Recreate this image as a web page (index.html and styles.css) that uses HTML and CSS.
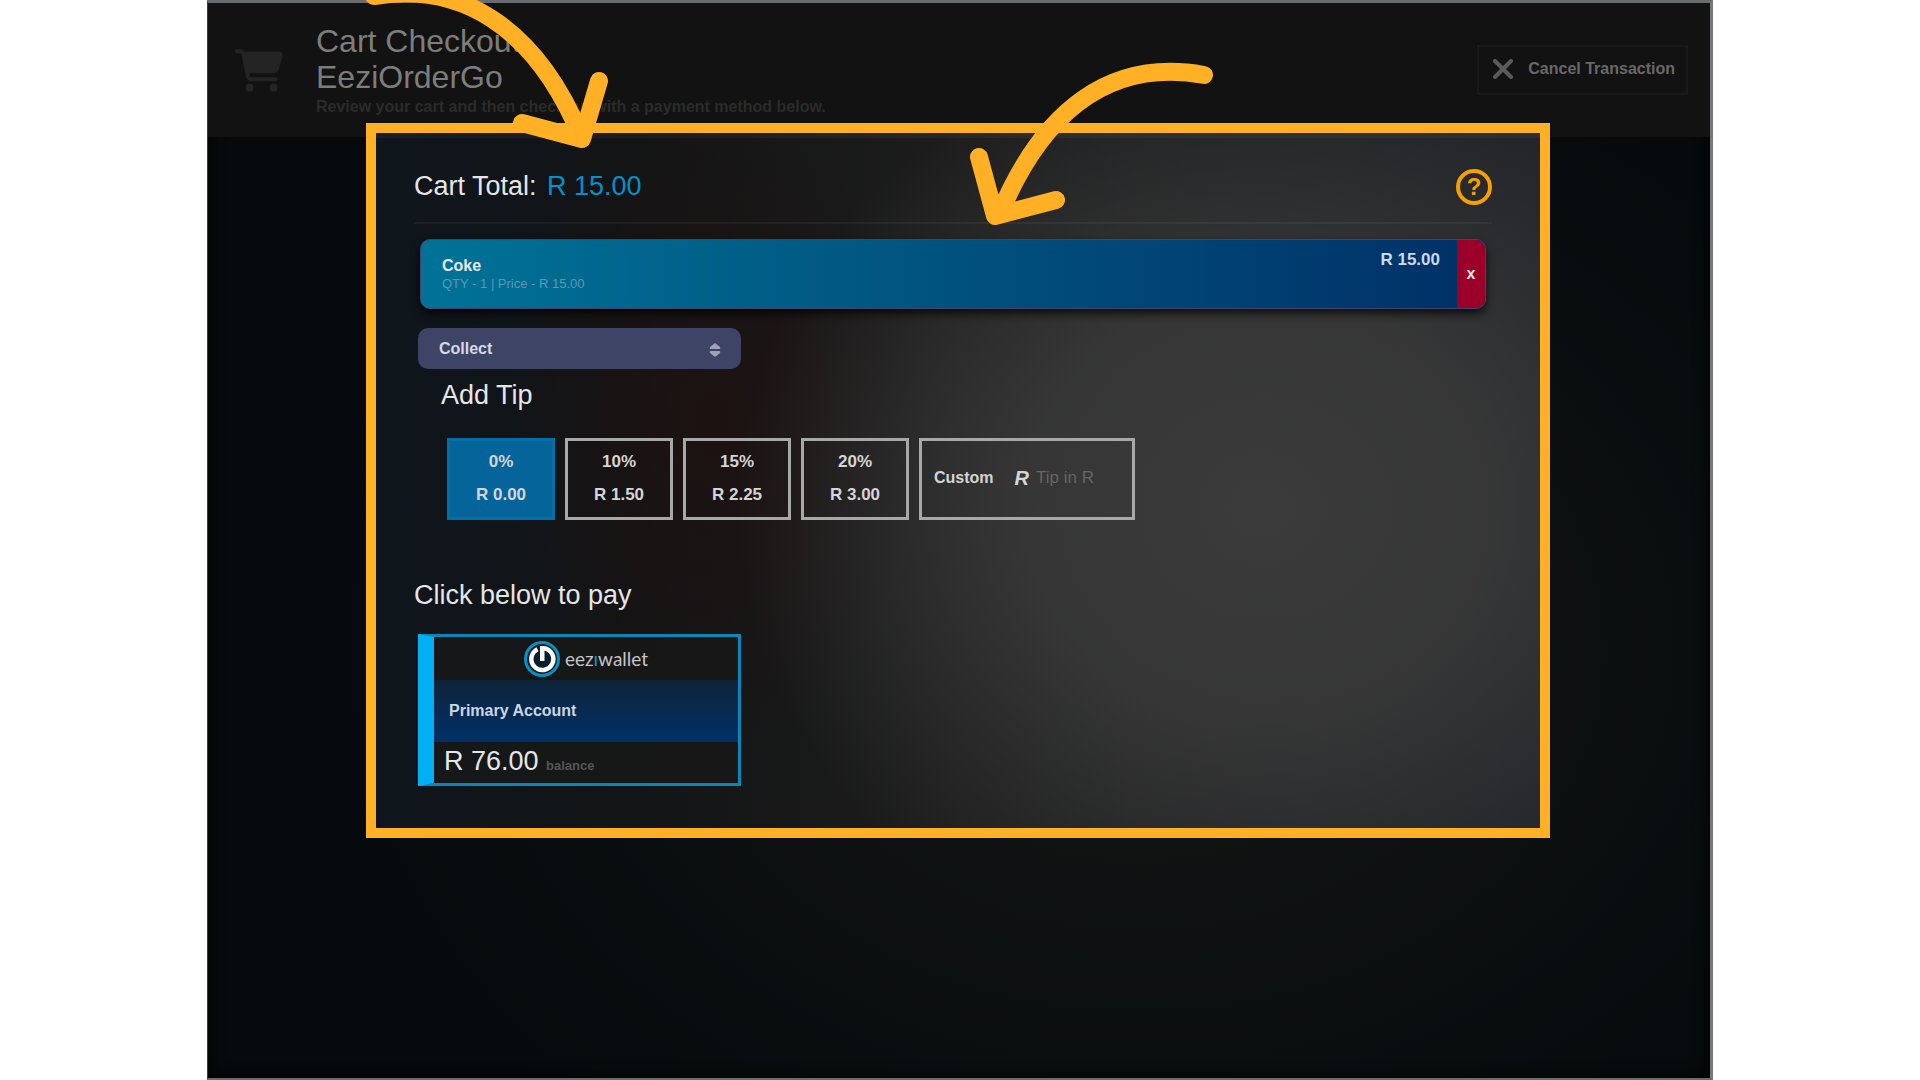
FILE: index.html
```html
<!DOCTYPE html>
<html lang="en">
<head>
    <meta charset="UTF-8">
    <meta name="viewport" content="width=device-width, initial-scale=1.0">
    <title>Cart Checkout</title>
    <link rel="stylesheet" href="styles.css">
</head>
<body>
    <div class="app">
        <header class="header">
            <svg class="cart-icon" viewBox="0 0 576 512" aria-hidden="true"><path d="M0 24C0 10.7 10.7 0 24 0H69.5c22 0 41.5 12.8 50.6 32h411c26.3 0 45.5 25 38.6 50.4l-41 152.3c-8.5 31.4-37 53.3-69.5 53.3H170.7l5.4 28.5c2.2 11.3 12.1 19.5 23.6 19.5H488c13.3 0 24 10.7 24 24s-10.7 24-24 24H199.7c-34.6 0-64.3-24.6-70.7-58.5L77.4 54.5c-.7-3.8-4-6.5-7.9-6.5H24C10.7 48 0 37.3 0 24zM128 464a48 48 0 1 1 96 0 48 48 0 1 1 -96 0zm336-48a48 48 0 1 1 0 96 48 48 0 1 1 0-96z"/></svg>
            <div class="header-text">
                <h1>Cart Checkout<br>EeziOrderGo</h1>
                <p>Review your cart and then checkout with a payment method below.</p>
            </div>
            <button type="button" class="btn-cancel">
                <svg viewBox="0 0 22 20" aria-hidden="true"><path d="M3 2 19 18M19 2 3 18"/></svg>
                Cancel Transaction
            </button>
        </header>

        <main class="panel">
            <div class="total-row">
                <h2>Cart Total: <span class="total-price">R 15.00</span></h2>
                <button type="button" class="btn-help" aria-label="Help">?</button>
            </div>

            <div class="item">
                <div class="item-info">
                    <div class="item-name">Coke</div>
                    <div class="item-qty">QTY - 1 | Price - R 15.00</div>
                </div>
                <div class="item-price">R 15.00</div>
                <button type="button" class="btn-remove">x</button>
            </div>

            <div class="select-wrap">
                <select class="select" aria-label="Order type">
                    <option>Collect</option>
                </select>
                <svg class="select-arrows" viewBox="0 0 12 14" aria-hidden="true"><path d="M6 0 11 4Q12 6 10 6H2Q0 6 1 4ZM6 14 11 10Q12 8 10 8H2Q0 8 1 10Z"/></svg>
            </div>

            <h2 class="tip-title">Add Tip</h2>
            <div class="tips">
                <button type="button" class="tip tip-active"><span>0%</span><span>R 0.00</span></button>
                <button type="button" class="tip"><span>10%</span><span>R 1.50</span></button>
                <button type="button" class="tip"><span>15%</span><span>R 2.25</span></button>
                <button type="button" class="tip"><span>20%</span><span>R 3.00</span></button>
                <div class="tip-custom">
                    <label for="customTip">Custom</label>
                    <span class="currency">R</span>
                    <input type="text" id="customTip" placeholder="Tip in R">
                </div>
            </div>

            <h2 class="pay-title">Click below to pay</h2>
            <button type="button" class="wallet">
                <span class="wallet-logo">
                    <svg viewBox="0 0 36 36" aria-hidden="true">
                        <circle cx="18" cy="18" r="16.5" fill="#04202c" stroke="#0b8fc0" stroke-width="3"/>
                        <path d="M13.5 8.2A11 11 0 1 0 20 7.2" fill="none" stroke="#fff" stroke-width="4.5"/>
                        <path d="M16 5h4.5v15h-4.5z" fill="#fff"/>
                    </svg>
                    <span class="wallet-brand">eez<i>ı</i>wallet</span>
                </span>
                <span class="wallet-name">Primary Account</span>
                <span class="wallet-balance">R 76.00 <small>balance</small></span>
            </button>
        </main>

        <!-- guide arrows -->
        <svg class="arrow arrow-total" viewBox="0 0 250 150" aria-hidden="true">
            <path d="M14-4C99-18 174 24 221 136M239 81 222 139 162 123"/>
        </svg>
        <svg class="arrow arrow-item" viewBox="0 0 260 180" aria-hidden="true">
            <path d="M244 20C150 3 83 56 40 158M19 102 35 161 96 145"/>
        </svg>
    </div>
</body>
</html>
```
FILE: styles.css
```css
* {
    box-sizing: border-box;
}
body {
    margin: 0;
    background-color: #fff;
    font-family: "Liberation Sans", Arial, sans-serif;
    font-size: 16px;
    color: #e6e6e6;
}
h1, h2, p {
    margin: 0;
    font-weight: normal;
}
button, select, input {
    font-family: inherit;
    color: inherit;
}
.app {
    position: relative;
    max-width: 1506px;
    min-height: 100vh;
    margin: 0 auto;
    border: 1px solid #3c3d40;
    border-width: 3px 3px 2px 1px;
    border-color: #6b6c70 #77787c #6b6c70 #3c3d40;
    background:
        radial-gradient(ellipse 55% 60% at 62% 60%, #151616 0%, rgba(19, 19, 19, 0) 100%),
        #060a0c;
    box-shadow: inset 0 0 16px #000;
}

/* header */
.header {
    display: flex;
    align-items: flex-start;
    height: 134px;
    padding: 20px 22px 0 27px;
    background-color: #121212;
}
.cart-icon {
    width: 48px;
    height: 43px;
    margin: 26px 33px 0 0;
    fill: #242424;
}
.header-text {
    flex: 1;
}
.header h1 {
    font-size: 32px;
    line-height: 36px;
    color: #7d7d7d;
}
.header p {
    font-size: 16px;
    font-weight: bold;
    line-height: 24px;
    color: #2b2b2b;
}
.btn-cancel {
    display: flex;
    align-items: center;
    gap: 14px;
    height: 50px;
    margin-top: 22px;
    padding: 0 11px 2px 13px;
    border: 2px solid #191919;
    background: none;
    font-size: 16px;
    font-weight: bold;
    color: #686868;
}
.btn-cancel svg {
    width: 22px;
    height: 20px;
    fill: none;
    stroke: #5a5a5a;
    stroke-width: 4;
    stroke-linecap: round;
}

/* highlighted panel */
.panel {
    position: relative;
    margin: -14px 160px 0 158px;
    padding: 35px 48px 42px 38px;
    border: 10px solid #ffb024;
    background:
        linear-gradient(rgba(255, 255, 255, 0.04), rgba(255, 255, 255, 0.04)) 0 0 / 100% 5px no-repeat,
        radial-gradient(ellipse 45% 68% at 76% 54%, #3b3b3b 0%, rgba(58, 58, 58, 0.85) 45%, rgba(48, 48, 48, 0) 100%),
        radial-gradient(ellipse 18% 45% at 29% 42%, #1d1212 0%, rgba(28, 18, 18, 0) 100%),
        linear-gradient(90deg, #0e161d 0%, #131415 22%, #1d1d1d 50%, #202328 100%);
}
.panel h2 {
    font-size: 27px;
    line-height: 36px;
}
.total-row {
    display: flex;
    justify-content: space-between;
    height: 56px;
    border-bottom: 2px solid rgba(255, 255, 255, 0.05);
}
.total-price {
    margin-left: 3px;
    color: #0690c8;
}
.btn-help {
    width: 36px;
    height: 36px;
    margin-top: 1px;
    padding: 0;
    border: 4px solid #f5a000;
    border-radius: 50%;
    background: none;
    font-size: 24px;
    font-weight: bold;
    line-height: 28px;
    color: #f5a000;
}

/* cart item */
.item {
    display: flex;
    height: 70px;
    margin: 15px 6px 0;
    border: 1px solid #3f4570;
    border-radius: 10px;
    background: linear-gradient(90deg, #007396, #003268 97%);
    box-shadow: 0 5px 8px rgba(0, 0, 0, 0.7);
    overflow: hidden;
}
.item-info {
    flex: 1;
    padding: 16px 0 0 21px;
}
.item-name {
    font-weight: bold;
    line-height: 19px;
}
.item-qty {
    font-size: 13px;
    line-height: 18px;
    color: #5d97b6;
}
.item-price {
    padding: 10px 17px 0 0;
    font-size: 17px;
    font-weight: bold;
    line-height: 20px;
    color: #ccd9e6;
}
.btn-remove {
    width: 28px;
    padding: 0;
    border: 0;
    background-color: #9c0028;
    font-size: 16px;
    font-weight: bold;
}

/* order type */
.select-wrap {
    position: relative;
    width: 323px;
    margin: 19px 0 0 4px;
}
.select {
    display: block;
    width: 100%;
    height: 41px;
    padding: 0 21px;
    border: 0;
    border-radius: 10px;
    appearance: none;
    background-color: #3d4466;
    font-size: 16px;
    font-weight: bold;
    color: #d6d8e2;
}
.select-arrows {
    position: absolute;
    top: 15px;
    right: 20px;
    width: 12px;
    height: 14px;
    fill: #a0a3b4;
}

/* tips */
.panel .tip-title {
    margin: 8px 0 0 27px;
}
.tips {
    display: flex;
    gap: 10px;
    margin: 25px 0 0 33px;
}
.tip {
    display: flex;
    flex-direction: column;
    align-items: center;
    width: 108px;
    height: 82px;
    padding: 4px 0 0;
    border: 3px solid #a9a8a8;
    background: none;
    font-size: 17px;
    font-weight: bold;
    line-height: 33px;
    color: #d5d5d5;
}
.tip-active {
    border-color: #046ea6;
    background-color: #05659a;
}
.tip-custom {
    display: flex;
    align-items: center;
    width: 216px;
    height: 82px;
    padding: 0 12px 2px;
    border: 3px solid #a9a8a8;
    font-weight: bold;
    color: #d5d5d5;
}
.currency {
    margin: 0 7px 0 21px;
    font-size: 20px;
    font-style: italic;
}
.tip-custom input {
    flex: 1;
    min-width: 0;
    padding: 0;
    border: 0;
    background: none;
    font-size: 17px;
}
.tip-custom input::placeholder {
    color: #656565;
}

/* wallet card */
.panel .pay-title {
    margin-top: 57px;
}
.wallet {
    display: flex;
    flex-direction: column;
    width: 323px;
    height: 152px;
    margin: 21px 0 0 4px;
    padding: 0;
    border: 3px solid #0787b8;
    border-left: 16px solid #00b0f4;
    background-color: rgba(24, 24, 24, 0.7);
    text-align: left;
}
.wallet-logo {
    display: flex;
    flex-shrink: 0;
    align-items: center;
    justify-content: center;
    gap: 5px;
    width: 100%;
    height: 43px;
}
.wallet-logo svg {
    width: 36px;
    height: 36px;
}
.wallet-brand {
    font-family: Lato, sans-serif;
    font-size: 19px;
    line-height: 24px;
    color: #c4c4c4;
}
.wallet-brand i {
    font-style: normal;
    color: #0b9bd0;
}
.wallet-name {
    flex-shrink: 0;
    width: 100%;
    height: 62px;
    padding-left: 15px;
    background: linear-gradient(#0f2338, #00306a);
    font-size: 16px;
    font-weight: bold;
    line-height: 62px;
    color: #ccd6e2;
}
.wallet-balance {
    padding-left: 10px;
    font-size: 27px;
    line-height: 38px;
}
.wallet-balance small {
    font-size: 13px;
    font-weight: bold;
    color: #555;
}

/* guide arrows lie over header and panel */
.arrow {
    position: absolute;
    fill: none;
    stroke: #ffb024;
    stroke-width: 18;
    stroke-linecap: round;
    stroke-linejoin: round;
    pointer-events: none;
}
.arrow-total {
    top: -3px;
    left: 152px;
    width: 250px;
    height: 150px;
}
.arrow-item {
    top: 52px;
    left: 752px;
    width: 260px;
    height: 180px;
}
```
